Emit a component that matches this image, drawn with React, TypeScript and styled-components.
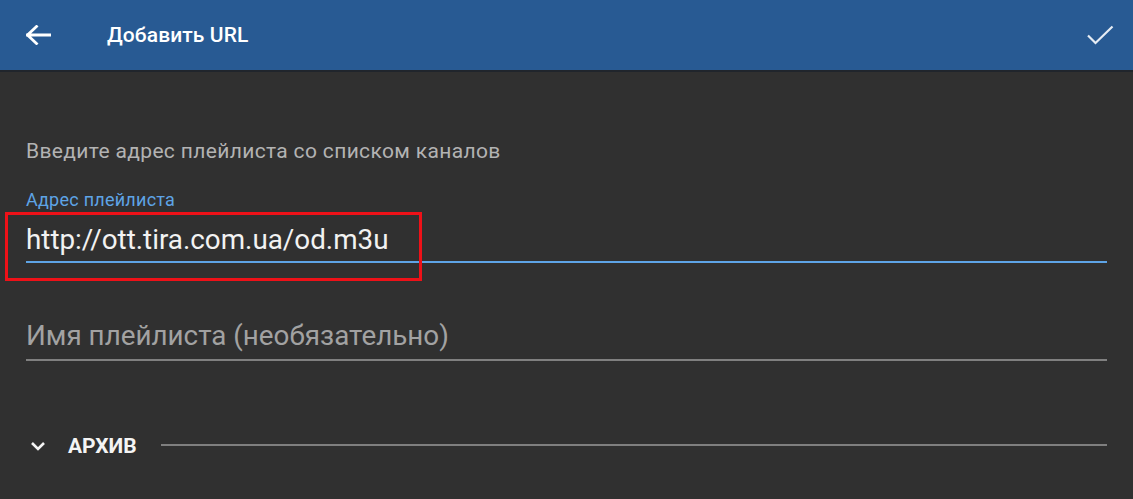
import React from "react";
import styled, { createGlobalStyle } from "styled-components";

const Global = createGlobalStyle`
  html, body { margin: 0; padding: 0; background: #303030; }
  body { font-family: Roboto, "Noto Sans", sans-serif; }
  * { box-sizing: border-box; }
`;

const Page = styled.div`
  width: 1133px;
  height: 499px;
  background: #303030;
  display: flex;
  flex-direction: column;
  overflow: hidden;
`;

const AppBar = styled.header`
  height: 72px;
  flex: none;
  background: #285a93;
  border-bottom: 2px solid #20252c;
  display: flex;
  align-items: center;
  padding: 0 19px 0 26px;
`;

const IconButton = styled.div`
  display: flex;
  align-items: center;
  justify-content: center;
  line-height: 0;
`;

const Title = styled.h1`
  margin: 0 0 0 56px;
  flex: 1;
  font-size: 21px;
  font-weight: 500;
  color: #ffffff;
  line-height: 26px;
  letter-spacing: 0.1px;
`;

const Content = styled.main`
  display: flex;
  flex-direction: column;
  padding: 65.8px 26px 0 26px;
`;

const Helper = styled.p`
  margin: 0;
  font-size: 21px;
  line-height: 26px;
  letter-spacing: 0.35px;
  color: #b3b3b3;
`;

const Field = styled.div<{ $gap: number }>`
  position: relative;
  margin-top: ${(p) => p.$gap}px;
  display: flex;
  flex-direction: column;
`;

const Label = styled.label`
  font-size: 18px;
  line-height: 22px;
  letter-spacing: 0.25px;
  color: #5ea4e6;
  margin-bottom: 12.15px;
`;

const Input = styled.div<{ $focused?: boolean; $placeholder?: boolean }>`
  font-size: 27.8px;
  line-height: 34px;
  color: ${(p) => (p.$placeholder ? "#a2a2a2" : "#f2f2f2")};
  padding-bottom: ${(p) => (p.$focused ? 4 : 5.5)}px;
  border-bottom: 2px solid ${(p) => (p.$focused ? "#5ea4e6" : "#808080")};
`;

const Highlight = styled.div`
  position: absolute;
  left: -21px;
  top: 23.15px;
  width: 417px;
  height: 69px;
  border: 3px solid #ee1118;
  pointer-events: none;
`;

const Section = styled.div`
  margin-top: 72.3px;
  display: flex;
  align-items: center;
  height: 26px;
`;

const Chevron = styled.div`
  width: 42px;
  padding-left: 4px;
  line-height: 0;
`;

const SectionTitle = styled.span`
  font-size: 21px;
  line-height: 26px;
  font-weight: 700;
  color: #f4f4f4;
`;

const Rule = styled.div`
  flex: 1;
  height: 2px;
  margin-left: 24px;
  margin-top: -2px;
  background: #7f7f7f;
`;

export default function App() {
  return (
    <>
      <Global />
      <Page>
        <AppBar>
          <IconButton>
            <svg width="25" height="20" viewBox="0 0 25 20" fill="none">
              <path d="M1.5 10H24.5M1.5 10L10.5 1.5M1.5 10L10.5 18.5" stroke="#fff" strokeWidth="2.8" strokeLinecap="square" />
            </svg>
          </IconButton>
          <Title>Добавить URL</Title>
          <IconButton>
            <svg width="28" height="20" viewBox="0 0 28 20" fill="none">
              <path d="M2 10.5L9.5 18L26.5 1.5" stroke="#e6ecf4" strokeWidth="2.2" />
            </svg>
          </IconButton>
        </AppBar>
        <Content>
          <Helper>Введите адрес плейлиста со списком каналов</Helper>
          <Field $gap={25}>
            <Label>Адрес плейлиста</Label>
            <Input $focused>http://ott.tira.com.ua/od.m3u</Input>
            <Highlight />
          </Field>
          <Field $gap={56.5}>
            <Input $placeholder>Имя плейлиста (необязательно)</Input>
          </Field>
          <Section>
            <Chevron>
              <svg width="16" height="10" viewBox="0 0 16 10" fill="none">
                <path d="M2 2L8 8L14 2" stroke="#f4f4f4" strokeWidth="2.6" />
              </svg>
            </Chevron>
            <SectionTitle>АРХИВ</SectionTitle>
            <Rule />
          </Section>
        </Content>
      </Page>
    </>
  );
}
